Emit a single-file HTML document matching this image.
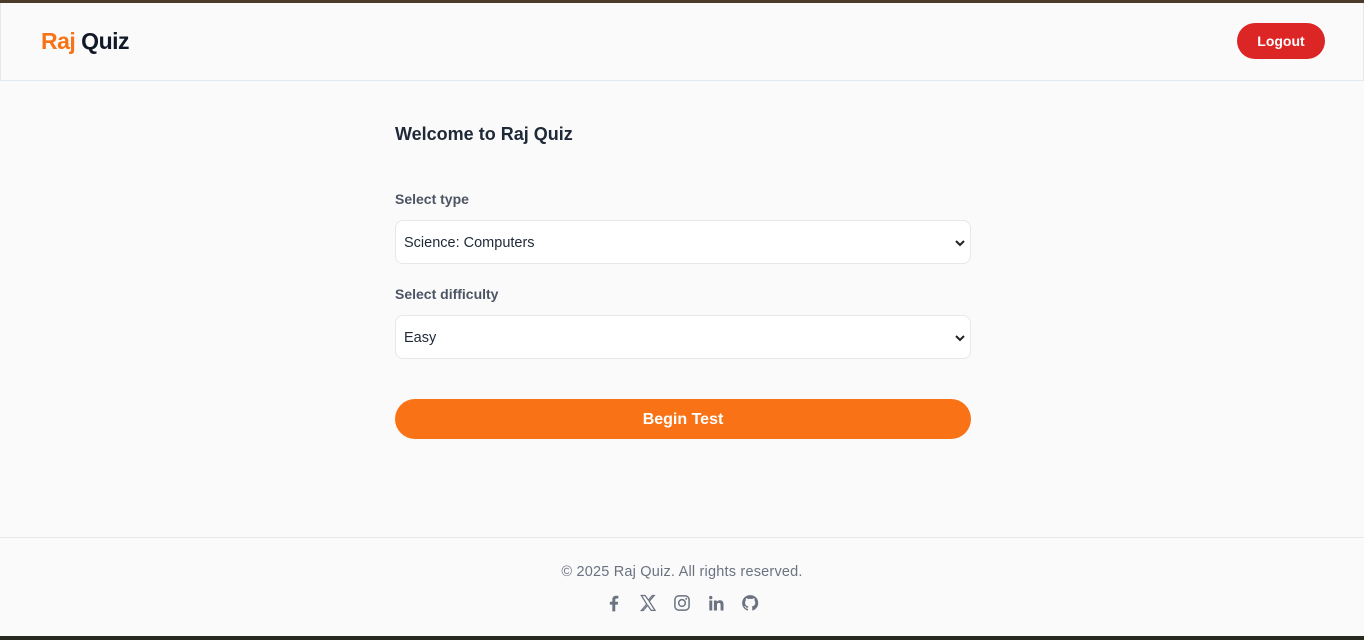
<!DOCTYPE html>
<html><head><meta charset="utf-8"><style>
*{box-sizing:border-box;margin:0;padding:0}
body{width:1364px;height:640px;background:#fafafa;font-family:"Liberation Sans",sans-serif;position:relative;overflow:hidden}
.top{position:absolute;left:0;top:0;width:1364px;height:3px;background:#4a3b2a}
.bot{position:absolute;left:0;top:636px;width:1364px;height:4px;background:#262a1e}
header{position:absolute;top:3px;left:0;width:1364px;height:78px;border:1px solid #e2e8f0;border-top:none;background:#fafafa}
.logo{position:absolute;left:40px;top:25px;font-size:23px;font-weight:bold;letter-spacing:-0.5px;color:#111827}
.logo span{color:#f97316}
.logout{position:absolute;left:1236px;top:20px;width:88px;height:36px;border-radius:18px;background:#dc2626;color:#fff;font-weight:bold;font-size:14px;text-align:center;line-height:36px}
h1{position:absolute;left:395px;top:124px;font-size:18px;color:#1f2937;font-weight:bold}
label{position:absolute;left:395px;font-size:14px;font-weight:bold;color:#4b5563}
.sel{position:absolute;left:395px;width:576px;height:44px;border:1px solid #e5e7eb;border-radius:8px;background:#fff;font-size:14.5px;color:#1f2937;padding-left:8px;line-height:44px}
.sel svg{position:absolute;right:5px;top:18px}
.btn{position:absolute;left:395px;top:399px;width:576px;height:40px;border-radius:20px;background:#f97316;color:#fff;font-weight:bold;font-size:16px;text-align:center;line-height:41px}
footer{position:absolute;top:537px;left:0;width:1364px;height:99px;border-top:1px solid #e5e7eb}
.copy{position:absolute;top:26px;width:100%;text-align:center;font-size:14.5px;letter-spacing:0.2px;color:#6b7280}
.icons{position:absolute;top:55px;left:604px;display:flex;gap:14px}
.icons svg{width:20px;height:20px}
</style></head><body>
<div class="top"></div>
<header><div class="logo"><span>Raj</span> Quiz</div><div class="logout">Logout</div></header>
<h1>Welcome to Raj Quiz</h1>
<label style="top:191px">Select type</label>
<div class="sel" style="top:220px">Science: Computers<svg width="10" height="8" viewBox="0 0 10 8"><path d="M1 2l4 4 4-4" fill="none" stroke="#222" stroke-width="2"/></svg></div>
<label style="top:286px">Select difficulty</label>
<div class="sel" style="top:315px">Easy<svg width="10" height="8" viewBox="0 0 10 8"><path d="M1 2l4 4 4-4" fill="none" stroke="#222" stroke-width="2"/></svg></div>
<div class="btn">Begin Test</div>
<footer><div class="copy">© 2025 Raj Quiz. All rights reserved.</div>
<div class="icons">
<svg viewBox="0 0 24 24"><path d="M13.5 22v-8h3l.5-3.5h-3.5V8.3c0-1 .3-1.7 1.8-1.7h1.9V3.4c-.3 0-1.4-.1-2.7-.1-2.7 0-4.5 1.6-4.5 4.6v2.6H7V14h3v8z" fill="#6b7280"/></svg>
<svg viewBox="0 0 24 24"><path d="M4 3h4.5l4 5.6L17.3 3h2.2l-6 7 6.9 10.9h-4.5l-4.3-6.1L6.3 21H4l6.5-7.6z" fill="none" stroke="#6b7280" stroke-width="1.5"/></svg>
<svg viewBox="0 0 24 24"><rect x="3.5" y="3.5" width="17" height="17" rx="4.5" fill="none" stroke="#6b7280" stroke-width="1.8"/><circle cx="12" cy="12" r="4" fill="none" stroke="#6b7280" stroke-width="1.8"/><circle cx="17" cy="7" r="1.1" fill="#6b7280"/></svg>
<svg viewBox="0 0 24 24"><path d="M4 9h3.5v12H4zM5.7 3.5a2 2 0 110 4 2 2 0 010-4zM9.5 9H13v1.7c.6-1 1.8-2 3.7-2 3.7 0 4.3 2.4 4.3 5.6V21h-3.5v-5.9c0-1.4 0-3.2-2-3.2s-2.3 1.5-2.3 3.1V21H9.5z" fill="#6b7280"/></svg>
<svg viewBox="0 0 24 24"><path d="M12 2.5a9.5 9.5 0 00-3 18.5c.5.1.6-.2.6-.5v-1.7c-2.6.6-3.2-1.2-3.2-1.2-.4-1.1-1-1.4-1-1.4-.9-.6 0-.6 0-.6 1 .1 1.5 1 1.5 1 .9 1.5 2.3 1.1 2.8.8.1-.6.4-1.1.7-1.3-2.1-.2-4.3-1-4.300-4.7 0-1 .4-1.9 1-2.6-.1-.2-.4-1.2.1-2.5 0 0 .8-.3 2.6 1a9 9 0 014.8 0c1.8-1.3 2.6-1 2.6-1 .5 1.3.2 2.3.1 2.5.6.7 1 1.6 1 2.6 0 3.7-2.2 4.5-4.3 4.7.3.3.7.9.7 1.8v2.6c0 .3.2.6.7.5A9.5 9.5 0 0012 2.5z" fill="#6b7280"/></svg>
</div></footer>
<div class="bot"></div>
</body></html>
